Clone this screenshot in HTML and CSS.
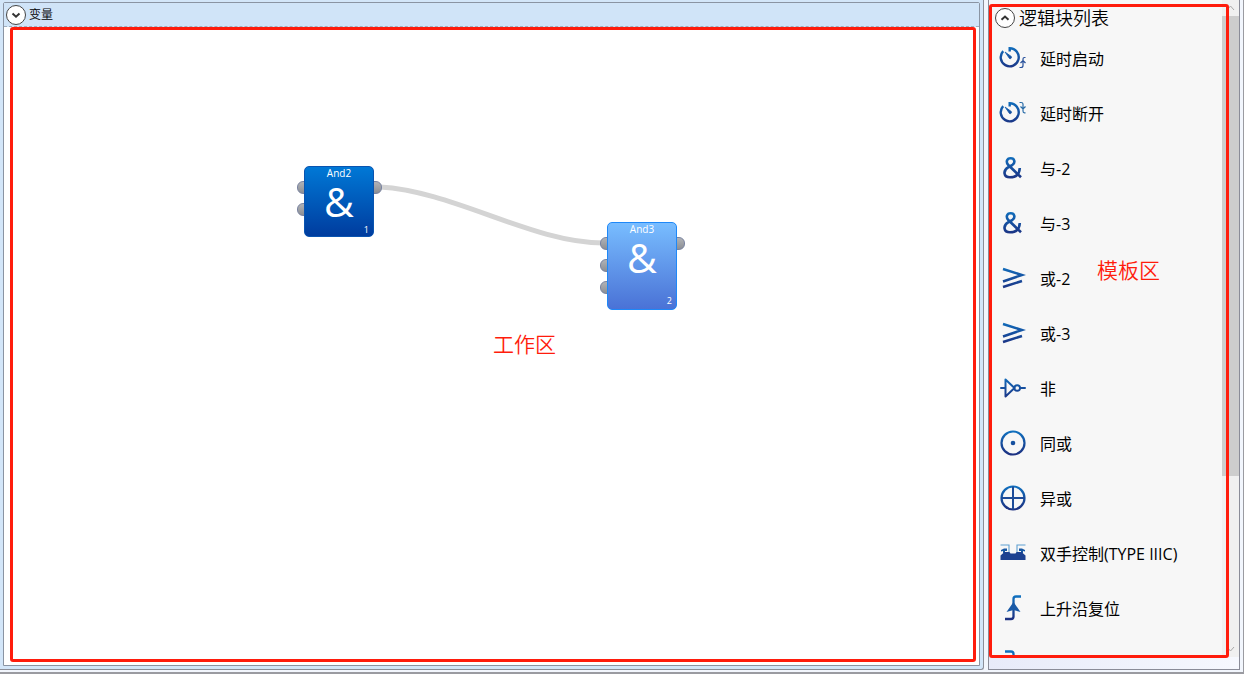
FILE: index.html
```html
<!DOCTYPE html>
<html lang="zh-CN">
<head>
<meta charset="utf-8">
<title>逻辑编辑器</title>
<link rel="stylesheet" href="styles.css">
</head>
<body>
<svg class="defs" width="0" height="0" aria-hidden="true">
  <defs>
    <linearGradient id="ink" gradientUnits="userSpaceOnUse" x1="0" y1="0" x2="0" y2="26">
      <stop offset="0" stop-color="#0f76c4"/><stop offset="1" stop-color="#1c2f80"/>
    </linearGradient>
    <symbol id="timer" viewBox="0 0 28 28">
      <path d="M10.700 7.500V4.300A9 9 0 1 1 4.200 7.100" fill="none" stroke="url(#ink)" stroke-width="2.400"/>
      <path d="M6 8L12.300 12.500A1.400 1.400 0 0 1 10.500 14.500Z" fill="url(#ink)" stroke="url(#ink)" stroke-width=".8"/>
    </symbol>
    <symbol id="amp" viewBox="0 0 28 28">
      <path d="M22 23.300L9.300 11C6.800 8.400 7.500 4.200 11.700 4.200C15.800 4.200 16.500 8.600 13.500 10.800L9.500 13.200C3.500 16.500 4.500 23.300 11 23.300C16.800 23.300 20.500 20 20.800 14" fill="none" stroke="url(#ink)" stroke-width="2.600"/>
    </symbol>
    <symbol id="geq" viewBox="0 0 28 28">
      <path d="M4 5L23 11L4 17.500M4 23L23 17" fill="none" stroke="url(#ink)" stroke-width="2.500"/>
    </symbol>
  </defs>
</svg>
<main class="app">
  <section class="editor">
    <div class="editor-frame">
      <header class="bar">
        <button class="round" aria-label="展开变量"><svg viewBox="0 0 18 18"><path d="M5.500 7.500L9 10.700L12.500 7.500"/></svg></button>
        <h1 class="bar-title">变量</h1>
      </header>
      <div class="canvas">
        <svg class="wire" aria-hidden="true"><path d="M376 160C450 164 528 216 600 216"/></svg>
        <div class="node node-and2">
          <i class="port in p1"></i><i class="port in p2"></i><i class="port out p1"></i>
          <div class="node-body dark"><span class="node-name">And2</span><span class="node-sign">&amp;</span><span class="node-index">1</span></div>
        </div>
        <div class="node node-and3">
          <i class="port in p1"></i><i class="port in p2"></i><i class="port in p3"></i><i class="port out p1"></i>
          <div class="node-body light"><span class="node-name">And3</span><span class="node-sign">&amp;</span><span class="node-index">2</span></div>
        </div>
        <span class="note note-work">工作区</span>
        <div class="mark mark-work"></div>
      </div>
    </div>
  </section>
  <aside class="palette">
    <div class="palette-main">
      <div class="palette-list">
        <header class="palette-head">
          <button class="round" aria-label="收起逻辑块列表"><svg viewBox="0 0 18 18"><path d="M5.500 10.700L9 7.500L12.500 10.700"/></svg></button>
          <h2 class="palette-title">逻辑块列表</h2>
        </header>
        <ul class="items">
          <li class="item"><svg class="icon" viewBox="0 0 28 28"><use href="#timer"/><path d="M26.500 13.500H25.500Q24 13.500 24 15V21.500Q24 23.500 22 23.500H20.500M21.500 19L24 16.500L26.500 19" fill="none" stroke="#264f9a" stroke-width="1.200"/></svg>延时启动</li>
          <li class="item"><svg class="icon" viewBox="0 0 28 28"><use href="#timer"/><path d="M20.500 3.500H22Q24 3.500 24 5V12Q24 13.800 25.500 13.800H26.500M21.500 7.500L24 10L26.500 7.500" fill="none" stroke="#286ba7" stroke-width="1.200"/></svg>延时断开</li>
          <li class="item"><svg class="icon" viewBox="0 0 28 28"><use href="#amp"/></svg>与-2</li>
          <li class="item"><svg class="icon" viewBox="0 0 28 28"><use href="#amp"/></svg>与-3</li>
          <li class="item"><svg class="icon" viewBox="0 0 28 28"><use href="#geq"/></svg>或-2</li>
          <li class="item"><svg class="icon" viewBox="0 0 28 28"><use href="#geq"/></svg>或-3</li>
          <li class="item"><svg class="icon" viewBox="0 0 28 28"><path d="M2 14H6.500M6.500 5.500V22.500L15.500 14ZM21 14H26" fill="none" stroke="url(#ink)" stroke-width="2" stroke-linejoin="round" stroke-linecap="round"/><circle cx="18.200" cy="14" r="2.800" fill="none" stroke="url(#ink)" stroke-width="1.900"/></svg>非</li>
          <li class="item"><svg class="icon" viewBox="0 0 28 28"><circle cx="14" cy="14" r="11.500" fill="none" stroke="url(#ink)" stroke-width="2.200"/><circle cx="14" cy="14" r="2.300" fill="url(#ink)"/></svg>同或</li>
          <li class="item"><svg class="icon" viewBox="0 0 28 28"><circle cx="14" cy="14" r="11.500" fill="none" stroke="url(#ink)" stroke-width="2.200"/><path d="M14 2.500V25.500M2.500 14H25.500" stroke="#1d4b98" stroke-width="2"/></svg>异或</li>
          <li class="item"><svg class="icon" viewBox="0 0 28 28"><path d="M1.500 6H10V13M26.500 6H18V13" fill="none" stroke="#5fa0d2" stroke-width="1.100"/><path d="M2 12.500V11L5 9.500H8V12H6V14H4V12ZM26 12.500V11L23 9.500H20V12H22V14H24V12Z" fill="#1859a4"/><path d="M1.500 21V16.500L5.500 13H10.500L11.500 14.500H16.500L17.500 13H22.500L26.500 16.500V21Z" fill="#1c4190"/></svg>双手控制(TYPE IIIC)</li>
          <li class="item"><svg class="icon" viewBox="0 0 28 28"><path d="M22 2.500H17Q14.500 2.500 14.500 5V22.500Q14.500 25 12 25H6" fill="none" stroke="url(#ink)" stroke-width="2.300"/><path d="M14.500 8L21.500 18L14.500 16L7.500 18Z" fill="#1a5aa7"/></svg>上升沿复位</li>
          <li class="item"><svg class="icon" viewBox="0 0 28 28"><path d="M6 2.500H12Q14.500 2.500 14.500 5V22.500Q14.500 25 17 25H22" fill="none" stroke="url(#ink)" stroke-width="2.300"/><path d="M14.500 19L21 10L14.500 12L8 10Z" fill="#1a5aa7"/></svg></li>
        </ul>
      </div>
      <div class="scroll" aria-hidden="true">
        <svg class="arrow" viewBox="0 0 17 16"><path d="M5 10L8.500 6L12 10"/></svg>
        <div class="thumb"></div>
        <svg class="arrow" viewBox="0 0 17 16"><path d="M5 6L8.500 10L12 6"/></svg>
      </div>
    </div>
    <span class="note note-palette">模板区</span>
    <div class="mark mark-palette"></div>
  </aside>
</main>
</body>
</html>
```
FILE: styles.css
```css
* { box-sizing: border-box; }

body {
  margin: 0;
  font-family: "Open Sans", "Noto Sans CJK SC", sans-serif;
  color: #000;
}

h1, h2, ul { margin: 0; padding: 0; font-weight: 350; list-style: none; }

.defs { position: absolute; }

.app {
  display: flex;
  gap: 4px;
  height: 100vh;
  padding-right: 3px;
  padding-bottom: 4px;
  background: linear-gradient(#f2f6fd, #f2f6fd) no-repeat 0 0 / 100% calc(100% - 2px), #9a9ba1;
  border-right: 1px solid #9a9ba1;
  overflow: hidden;
}

.editor {
  flex: 1;
  min-width: 0;
  padding: 2px 3px 3px;
  background: #d3e6f9;
  border-right: 1px solid #8c8f99;
  border-bottom: 1px solid #8c8f99;
  border-bottom-right-radius: 3px;
}

.editor-frame {
  display: flex;
  flex-direction: column;
  height: 100%;
  border: 1px solid #8a94a3;
  border-radius: 2px 2px 0 0;
  background: #fff;
}

.bar {
  display: flex;
  align-items: center;
  gap: 3px;
  height: 24px;
  padding-left: 2px;
  background: #d0e4f8;
  border-bottom: 1px dashed #9faebd;
}

.bar-title { font-size: 12px; line-height: 20px; }

.round {
  width: 20px;
  height: 20px;
  padding: 0;
  border: 1px solid #444;
  border-radius: 50%;
  background: #fff;
  flex: none;
}

.round svg { display: block; width: 18px; height: 18px; }
.round path { fill: none; stroke: #333; stroke-width: 2; }

.canvas { position: relative; flex: 1; }
.wire { position: absolute; width: 100%; height: 100%; }
.wire path { fill: none; stroke: #d4d4d4; stroke-width: 5; }

.node { position: absolute; width: 70px; }
.node-and2 { left: 300px; top: 139px; height: 71px; }
.node-and3 { left: 603px; top: 195px; height: 88px; }

.node-body {
  position: relative;
  display: flex;
  flex-direction: column;
  height: 100%;
  border-radius: 5px;
  color: #fff;
  text-align: center;
}

.dark { background: linear-gradient(#0078d6, #003c9e); border: 1px solid #0a54b0; }
.light { background: linear-gradient(#78bdff, #4a72d6); border: 1px solid #1e88f8; }

.node-name { font-size: 10px; line-height: 12px; }
.node-sign { font-size: 41px; line-height: 44px; font-weight: 450; }
.node-index { margin-top: auto; padding-right: 4px; font-size: 9px; line-height: 13px; padding-bottom: 2px; text-align: right; }

.port {
  position: absolute;
  width: 14px;
  height: 13px;
  border: 1px solid #7882a0;
  border-radius: 6px;
  background: linear-gradient(#b0b2b6, #8c8f95);
}
.in { left: -7px; }
.out { right: -8px; }
.p1 { top: 15px; }
.p2 { top: 37px; }
.p3 { top: 59px; }

.note { position: absolute; color: #ff1c0c; font-size: 21px; line-height: 30px; font-weight: 350; }
.note-work { left: 489px; top: 302px; }
.note-palette { left: 108px; top: 255px; }

.mark { position: absolute; border: 3px solid #ff1c0c; border-radius: 3px; pointer-events: none; }
.mark-work { inset: 0 3px 3px 6px; }
.mark-palette { inset: 4px 10px 11px 0; }

.palette {
  position: relative;
  display: flex;
  flex-direction: column;
  width: 252px;
  padding-bottom: 12px;
  border: 1px solid #8a8c98;
  border-top: 0;
  background: linear-gradient(90deg, #e8ebf9, #f6f8fe);
}

.palette-main { display: flex; flex: 1; min-height: 0; background: #f7f7f7; }
.palette-list { flex: 1; min-width: 0; overflow: hidden; }

.palette-head {
  display: flex;
  align-items: center;
  gap: 4px;
  height: 30px;
  padding: 6px 0 0 6px;
}

.palette-title { font-size: 18px; line-height: 24px; }

.item {
  display: flex;
  align-items: center;
  gap: 13px;
  height: 55px;
  padding-left: 10px;
  font-size: 16px;
  font-weight: 380;
  white-space: nowrap;
}

.icon { width: 28px; height: 28px; flex: none; }

.scroll { display: flex; flex-direction: column; width: 17px; background: #f0f0f0; }
.arrow { width: 17px; height: 16px; flex: none; }
.arrow path { fill: none; stroke: #a8a8a8; stroke-width: 1; }
.thumb { height: 70%; background: #cdcdcd; margin-bottom: auto; }
```
